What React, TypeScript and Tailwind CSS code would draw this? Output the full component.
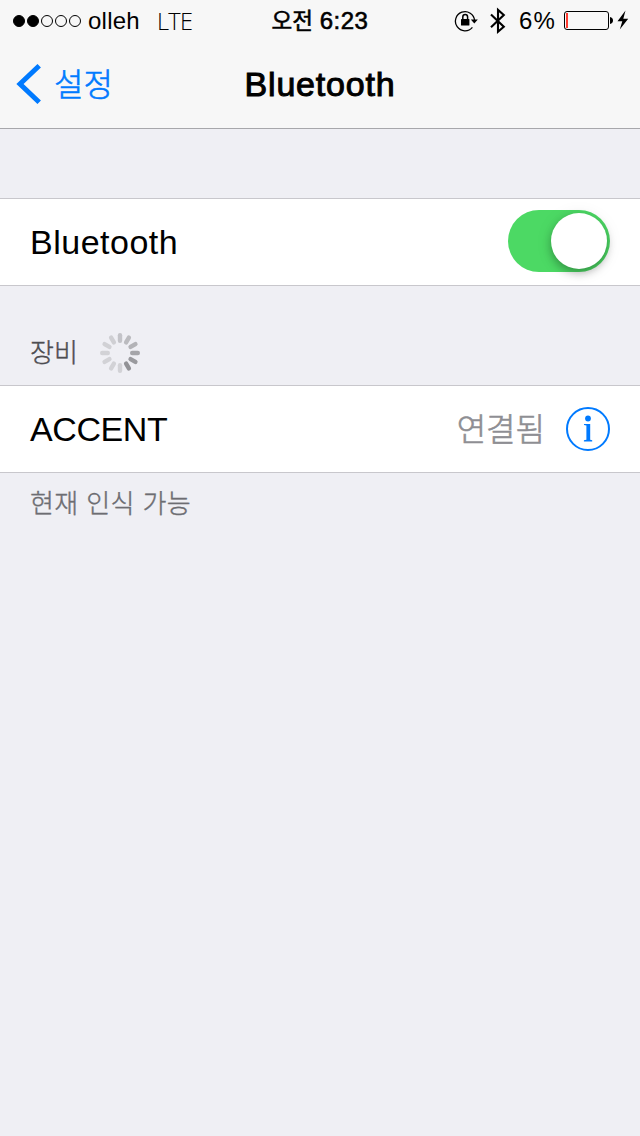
import React from 'react';
import clsx from 'clsx';

const SPINNER_COLORS = [
  '#c3c3c8', '#bbbbbf', '#b3b3b7', '#a5a5a9', '#9a9a9e', '#929296',
  '#d2d2d6', '#d2d2d6', '#d2d2d6', '#d2d2d6', '#d1d1d5', '#cfcfd3',
];

function SignalDots() {
  return (
    <div className="flex gap-0.5">
      {[1, 1, 0, 0, 0].map((on, i) => (
        <span key={i} className={clsx('size-3 rounded-full border border-black', on === 1 && 'bg-black')} />
      ))}
    </div>
  );
}

function RotationLockIcon() {
  return (
    <svg width="24" height="24" viewBox="0 0 24 24" fill="none">
      <path d="M18.4 18.4A9.6 9.6 0 1 1 20.600 11.500" stroke="black" strokeWidth="1.3" />
      <path d="M16.8 10.600h7l-3.500 4z" fill="black" />
      <rect x="7" y="10" width="8.4" height="6.400" rx="0.5" fill="black" />
      <path d="M8.800 10.500V7.900a2.400 2.400 0 0 1 4.800 0V10.500" stroke="black" strokeWidth="1.5" />
    </svg>
  );
}

function BluetoothIcon() {
  return (
    <svg width="18" height="28" viewBox="0 0 18 28" fill="none">
      <path d="M2 7.400l12.800 12.400-5.800 4.900V2.900L14.800 8 2 20.200" stroke="black" strokeWidth="2.100" />
    </svg>
  );
}

function BatteryIcon() {
  return (
    <svg width="66" height="22" viewBox="0 0 66 22" fill="none">
      <rect x="0.5" y="1.5" width="44" height="18" rx="2.5" stroke="black" />
      <rect x="2" y="3" width="2" height="15" fill="#ff3b30" />
      <path d="M46 7c2 .6 3 1.800 3 3.500S48 13.400 46 14z" fill="black" />
      <path d="M61.500 0.500L53.500 11.300h4.800L55.800 19.500l8.400-10.700h-4.900z" fill="black" />
    </svg>
  );
}

function StatusBar() {
  return (
    <div className="grid h-10 grid-cols-[240px_160px_240px] text-[24px] leading-10">
      <div className="flex items-center pl-[13px]">
        <SignalDots />
        <span className="ml-[7px] tracking-[0.25px]">olleh</span>
        <span className="ml-[17px] font-['Open_Sans','Noto_Sans',sans-serif] text-[23.5px] font-light tracking-[-0.7px]">LTE</span>
      </div>
      <div className="whitespace-nowrap pt-px text-center [-webkit-text-stroke:0.6px_black]">
        <span className="text-[22.5px]">오전</span> <span className="text-[24px] tracking-[0.5px]">6:23</span>
      </div>
      <div className="flex items-center pl-[54px]">
        <RotationLockIcon />
        <span className="ml-[11px]"><BluetoothIcon /></span>
        <span className="ml-[12px] w-[45px] tracking-[1.200px]">6%</span>
        <BatteryIcon />
      </div>
    </div>
  );
}

function NavBar() {
  return (
    <div className="grid h-[88px] grid-cols-[240px_160px_240px] items-center">
      <div className="flex items-center pl-4 text-[#007aff]">
        <svg width="26" height="40" viewBox="0 0 26 40" fill="none">
          <path d="M23.200 1.800L4 20l19.200 18.200" stroke="currentColor" strokeWidth="5" />
        </svg>
        <span className="ml-[12px] pt-[2px] text-[32px] font-light leading-[40px] [-webkit-text-stroke:0.6px_#007aff]">설정</span>
      </div>
      <h1 className="whitespace-nowrap text-center text-[34px] leading-[40px] tracking-[0.8px] [-webkit-text-stroke:1px_black]">
        Bluetooth
      </h1>
    </div>
  );
}

function Toggle() {
  return (
    <div className="mb-0.5 flex h-[62px] w-[102px] justify-end rounded-full bg-[#4cd964] p-[3px]">
      <div className="size-14 rounded-full bg-white shadow-[0_4px_8px_rgba(0,0,0,0.28),0_2px_18px_rgba(0,0,0,0.08)]" />
    </div>
  );
}

function Spinner() {
  return (
    <svg width="40" height="40" viewBox="0 0 40 40">
      {SPINNER_COLORS.map((color, i) => (
        <rect key={i} x="17.8" y="0" width="4.400" height="10" rx="2.200" fill={color} transform={`rotate(${i * 30} 20 20)`} />
      ))}
    </svg>
  );
}

function InfoButton() {
  return (
    <svg width="44" height="44" viewBox="0 0 44 44" fill="none">
      <circle cx="22" cy="22" r="21" stroke="#007aff" strokeWidth="2" />
      <circle cx="22" cy="11.500" r="2.900" fill="#007aff" />
      <path d="M18 17h6.200v15.800l2 .500V34.400h-8.300v-1.100l2.500-.500V18.600l-2.400-.500z" fill="#007aff" />
    </svg>
  );
}

function Row({ label, wide, children }: { label: string; wide?: boolean; children: React.ReactNode }) {
  return (
    <div className="flex h-[88px] items-center justify-between border-y border-[#c8c7cc] bg-white px-[30px]">
      <span className={clsx('text-[34px] leading-[40px]', wide ? 'tracking-[0.5px]' : 'tracking-[-0.4px]')}>{label}</span>
      {children}
    </div>
  );
}

export default function App() {
  return (
    <div className="h-[1136px] w-[640px] overflow-hidden bg-[#efeff4] font-['Liberation_Sans','Noto_Sans_CJK_KR',sans-serif] text-black">
      <header className="h-[129px] border-b border-[#a7a7ab] bg-[#f7f7f7]">
        <StatusBar />
        <NavBar />
      </header>

      <main className="pt-[69px]">
        <Row label="Bluetooth" wide>
          <Toggle />
        </Row>

        {/* Device list */}
        <div className="flex h-[99px] items-end gap-[22px] px-[30px] pb-3">
          <span className="text-[26px] font-light leading-[40px] text-[#4d4d51] [-webkit-text-stroke:0.4px_#4d4d51]">장비</span>
          <Spinner />
        </div>
        <Row label="ACCENT">
          <div className="flex items-center gap-[21px]">
            <span className="pt-[2px] text-[32px] font-light leading-[40px] text-[#8e8e93] [-webkit-text-stroke:0.6px_#8e8e93]">연결됨</span>
            <InfoButton />
          </div>
        </Row>
        <p className="px-[30px] pt-[11px] text-[26px] font-light leading-[40px] tracking-[0.4px] text-[#6d6d72] [-webkit-text-stroke:0.4px_#6d6d72]">
          현재 인식 가능
        </p>
      </main>
    </div>
  );
}
